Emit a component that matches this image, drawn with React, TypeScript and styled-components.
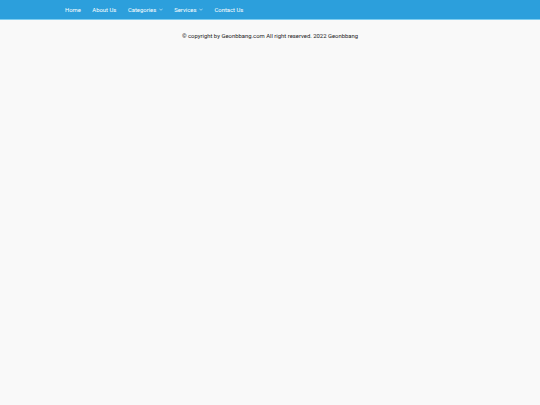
import React from "react";
import styled, { createGlobalStyle } from "styled-components";

const Global = createGlobalStyle`
  html, body { margin: 0; padding: 0; background: #f9f9f9; }
  body { font-family: Roboto, "Liberation Sans", sans-serif; }
`;

const Page = styled.div`
  min-height: 405px;
  background: #f9f9f9;
`;

const NavBar = styled.nav`
  height: 19px;
  background: #2c9fdc;
  border-bottom: 1px solid #7fcdf0;
  display: flex;
  align-items: center;
  padding-left: 65px;
  gap: 11.5px;
`;

const NavItem = styled.a`
  color: #ffffff;
  font-size: 5.9px;
  text-decoration: none;
  display: flex;
  align-items: center;
  gap: 2.5px;
`;

const Chevron = () => (
  <svg width="4" height="3" viewBox="0 0 10 6" fill="none">
    <path d="M1 1l4 4 4-4" stroke="#fff" strokeWidth="1.4" />
  </svg>
);

const Footer = styled.p`
  margin: 0;
  padding-top: 13px;
  text-align: center;
  font-size: 5.9px;
  color: #222;
`;

export default function App() {
  return (
    <Page>
      <Global />
      <NavBar>
        <NavItem>Home</NavItem>
        <NavItem>About Us</NavItem>
        <NavItem>Categories<Chevron /></NavItem>
        <NavItem>Services<Chevron /></NavItem>
        <NavItem>Contact Us</NavItem>
      </NavBar>
      <Footer>© copyright by Geonbbang.com All right reserved. 2022 Geonbbang</Footer>
    </Page>
  );
}
